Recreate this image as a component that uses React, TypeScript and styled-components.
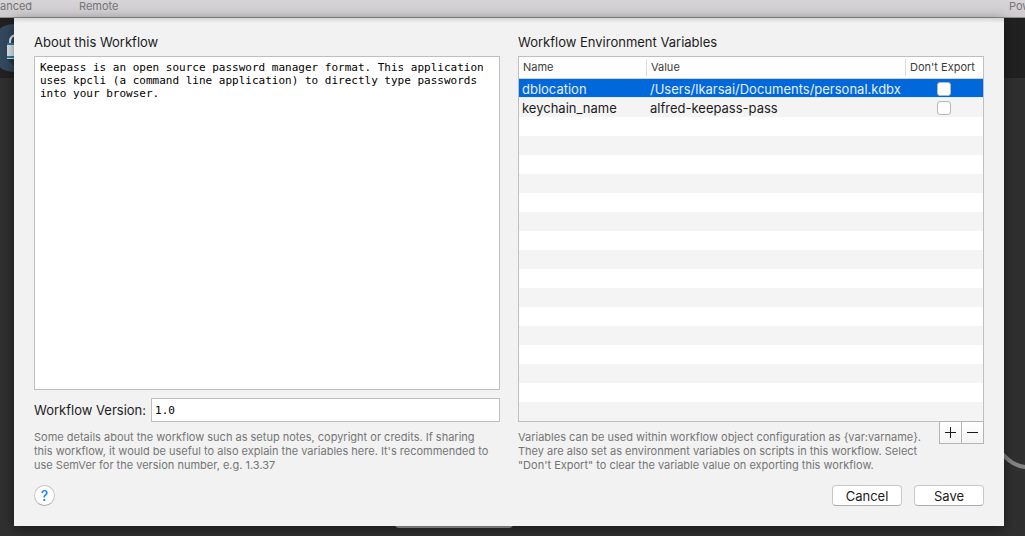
import React from "react";
import styled, { createGlobalStyle, css } from "styled-components";

const GlobalStyle = createGlobalStyle`
  *, *::before, *::after { box-sizing: border-box; }
  body {
    margin: 0;
    background: #303030;
    font-family: Inter, "Liberation Sans", sans-serif;
    font-size: 13px;
    color: #1c1c1c;
  }
  button, input, textarea { font: inherit; color: inherit; margin: 0; }
`;

const Page = styled.div`
  display: flex;
  flex-direction: column;
  min-height: 100vh;
  overflow: hidden;
`;

const TabBar = styled.nav`
  display: flex;
  height: 18px;
  background: linear-gradient(#d6d4d6, #cfcdcf);
  border-bottom: 1px solid #8f8e8f;
  color: #757475;
  font-size: 11px;
  line-height: 13px;
  white-space: nowrap;
`;

const Tab = styled.span<{ $width?: number }>`
  flex: none;
  width: ${(p) => (p.$width ? `${p.$width}px` : "16px")};
`;

const TabSpacer = styled.span`
  flex: 1;
`;

const Workspace = styled.main`
  position: relative;
  flex: 1;
  padding: 0 21px 10px 14px;
  background: linear-gradient(#212121 60px, #303030 60px);
`;

const WorkflowIcon = styled.svg`
  position: absolute;
  left: 0;
  top: 0;
`;

const Connector = styled.svg`
  position: absolute;
  right: 0;
  bottom: 60px;
`;

const CanvasNode = styled.div`
  position: absolute;
  left: 395px;
  bottom: 8px;
  width: 118px;
  height: 20px;
  border-radius: 4px;
  background: #a9a9a9;
`;

const Sheet = styled.form`
  position: relative;
  padding: 0 20px;
  background: #f2f2f2;
  box-shadow: 0 3px 12px rgba(0, 0, 0, 0.5);

  &::before {
    content: "";
    position: absolute;
    inset: 0 0 auto;
    height: 5px;
    background: linear-gradient(rgba(0, 0, 0, 0.12), rgba(0, 0, 0, 0));
  }
`;

const Columns = styled.div`
  display: grid;
  grid-template-columns: 1fr 1fr;
  gap: 18px;
`;

const Column = styled.section`
  display: flex;
  flex-direction: column;
  min-width: 0;
`;

const headingStyle = css`
  display: block;
  margin: 0;
  padding: 16px 0 6px;
  font-size: 13px;
  font-weight: 400;
  line-height: 16px;
`;

const HeadingLabel = styled.label`
  ${headingStyle}
`;

const Heading = styled.h2`
  ${headingStyle}
`;

const monoField = css`
  border: 1px solid #bfbfbf;
  border-radius: 0;
  outline: none;
  background: #fff;
  color: #000;
  font-family: "DejaVu Sans Mono", monospace;
  font-size: 11px;
  line-height: 13px;
`;

const AboutText = styled.textarea`
  ${monoField}
  flex: 1;
  width: 100%;
  padding: 4px 5px;
  resize: none;
`;

const VersionRow = styled.div`
  display: flex;
  align-items: center;
  gap: 5px;
  padding-top: 8px;
`;

const VersionLabel = styled.label`
  line-height: 24px;
  white-space: nowrap;
`;

const VersionInput = styled.input`
  ${monoField}
  flex: 1;
  min-width: 0;
  height: 24px;
  padding: 0 3px;
`;

const Hint = styled.p`
  flex: 1;
  margin: 0;
  padding-top: 8px;
  color: #757575;
  font-size: 11px;
  line-height: 14px;
  white-space: nowrap;
`;

const HintRow = styled.div`
  display: flex;
  align-items: flex-start;
`;

const TableFrame = styled.div`
  border: 1px solid #bfbfbf;
  background: #fff;
`;

const VariableTable = styled.table`
  width: 100%;
  table-layout: fixed;
  border-collapse: separate;
  border-spacing: 0;
`;

const HeadCell = styled.th<{ $width?: number }>`
  width: ${(p) => (p.$width ? `${p.$width}px` : "auto")};
  height: 22px;
  padding: 0;
  border-bottom: 1px solid #d0d0d0;
  color: #3c3c3c;
  font-size: 11px;
  font-weight: 400;
  line-height: 17px;
  text-align: left;
  white-space: nowrap;
`;

const HeadText = styled.span<{ $divided?: boolean }>`
  display: block;
  padding-left: 4px;
  border-right: ${(p) => (p.$divided ? "1px solid #dcdcdc" : "0")};
`;

const Row = styled.tr<{ $selected?: boolean }>`
  background: ${(p) => (p.$selected ? "#0068da" : "#fff")};
  color: ${(p) => (p.$selected ? "#e6effb" : "#1c1c1c")};

  &:nth-child(even) {
    background: #f4f4f4;
  }
`;

const Cell = styled.td<{ $center?: boolean }>`
  height: 19px;
  padding: ${(p) => (p.$center ? "3px 2px 2px 0" : "2px 3px 0")};
  line-height: 17px;
  white-space: nowrap;

  tbody > tr:first-child > & {
    box-shadow: inset 0 -1px #e4ecf6;
  }
`;

const Tick = styled.input`
  && {
    appearance: none;
    display: block;
    width: 14px;
    height: 14px;
    margin: 0 auto;
    border: 1px solid #b8b8b8;
    border-radius: 3px;
    background: #fff;
  }
`;

const EditButtons = styled.div`
  display: flex;
  margin-top: -1px;
`;

const EditButton = styled.button`
  display: grid;
  place-items: center;
  width: 23px;
  height: 23px;
  padding: 0;
  border: 1px solid #b4b4b4;
  background: linear-gradient(#fff, #f4f4f4);

  & + & {
    margin-left: -1px;
  }
`;

const Footer = styled.footer`
  display: flex;
  align-items: center;
  gap: 12px;
  padding: 13px 0 20px;
`;

const HelpButton = styled.button`
  width: 21px;
  height: 21px;
  margin-right: auto;
  padding: 0;
  border: 1px solid #c6c6c6;
  border-bottom-color: #acacac;
  border-radius: 50%;
  background: #fff;
  color: #1482f5;
  font-size: 14px;
  font-weight: 500;
  line-height: 18px;
`;

const PushButton = styled.button`
  width: 70px;
  height: 21px;
  padding: 0;
  border: 1px solid #c8c8c8;
  border-bottom-color: #acacac;
  border-radius: 4px;
  background: #fff;
  line-height: 18px;
`;

const variables = [
  { name: "dblocation", value: "/Users/lkarsai/Documents/personal.kdbx", selected: true },
  { name: "keychain_name", value: "alfred-keepass-pass", selected: false },
];

const emptyRows = Array.from({ length: 16 }, (_, i) => i);

const about =
  "Keepass is an open source password manager format. This application uses kpcli (a command line application) to directly type passwords into your browser.";

export default function App() {
  return (
    <Page>
      <GlobalStyle />
      <TabBar>
        <Tab $width={79}>anced</Tab>
        <Tab $width={60}>Remote</Tab>
        <TabSpacer />
        <Tab>Pow</Tab>
      </TabBar>
      <Workspace>
        <WorkflowIcon width="38" height="60" viewBox="0 0 38 60" aria-hidden="true">
          <circle cx="14" cy="30" r="24" fill="#34495e" />
          <path d="M7 41 L14 48 L38 48 L38 28 L14 28 Z" fill="#263648" />
          <path d="M10 26 V24 Q10 17 17 17" fill="none" stroke="#e9eef2" strokeWidth="2" />
          <rect x="7" y="25" width="16" height="16" fill="#dfe8ee" />
          <rect x="7" y="25" width="16" height="2" fill="#2980a9" />
          <rect x="7" y="38" width="16" height="2" fill="#2980a9" />
        </WorkflowIcon>
        <Connector width="40" height="40" viewBox="0 0 40 40" aria-hidden="true">
          <path d="M15 15 C22 24 30 31 42 31" fill="none" stroke="#858585" strokeWidth="4" />
        </Connector>
        <CanvasNode />
        <Sheet onSubmit={(e) => e.preventDefault()}>
          <Columns>
            <Column>
              <HeadingLabel htmlFor="about">About this Workflow</HeadingLabel>
              <AboutText id="about" defaultValue={about} spellCheck={false} />
              <VersionRow>
                <VersionLabel htmlFor="version">Workflow Version:</VersionLabel>
                <VersionInput id="version" defaultValue="1.0" />
              </VersionRow>
              <HintRow>
                <Hint>
                  Some details about the workflow such as setup notes, copyright or credits. If sharing
                  <br />
                  this workflow, it would be useful to also explain the variables here. It's recommended to
                  <br />
                  use SemVer for the version number, e.g. 1.3.37
                </Hint>
              </HintRow>
            </Column>
            <Column>
              <Heading id="variables">Workflow Environment Variables</Heading>
              <TableFrame>
                <VariableTable aria-labelledby="variables">
                  <thead>
                    <tr>
                      <HeadCell $width={128}>
                        <HeadText $divided>Name</HeadText>
                      </HeadCell>
                      <HeadCell>
                        <HeadText $divided>Value</HeadText>
                      </HeadCell>
                      <HeadCell $width={77}>
                        <HeadText>Don't Export</HeadText>
                      </HeadCell>
                    </tr>
                  </thead>
                  <tbody>
                    {variables.map((v) => (
                      <Row key={v.name} $selected={v.selected}>
                        <Cell>{v.name}</Cell>
                        <Cell>{v.value}</Cell>
                        <Cell $center>
                          <Tick type="checkbox" aria-label={`Don't export ${v.name}`} />
                        </Cell>
                      </Row>
                    ))}
                    {emptyRows.map((i) => (
                      <Row key={i}>
                        <Cell />
                        <Cell />
                        <Cell />
                      </Row>
                    ))}
                  </tbody>
                </VariableTable>
              </TableFrame>
              <HintRow>
                <Hint>
                  Variables can be used within workflow object configuration as {"{var:varname}"}.
                  <br />
                  They are also set as environment variables on scripts in this workflow. Select
                  <br />
                  "Don't Export" to clear the variable value on exporting this workflow.
                </Hint>
                <EditButtons>
                  <EditButton type="button" aria-label="Add variable">
                    <svg width="11" height="11" viewBox="0 0 11 11" stroke="#1c1c1c">
                      <path d="M0 5.5H11M5.5 0V11" />
                    </svg>
                  </EditButton>
                  <EditButton type="button" aria-label="Remove variable">
                    <svg width="11" height="11" viewBox="0 0 11 11" stroke="#1c1c1c">
                      <path d="M0 5.5H11" />
                    </svg>
                  </EditButton>
                </EditButtons>
              </HintRow>
            </Column>
          </Columns>
          <Footer>
            <HelpButton type="button" aria-label="Help">?</HelpButton>
            <PushButton type="button">Cancel</PushButton>
            <PushButton type="submit">Save</PushButton>
          </Footer>
        </Sheet>
      </Workspace>
    </Page>
  );
}
